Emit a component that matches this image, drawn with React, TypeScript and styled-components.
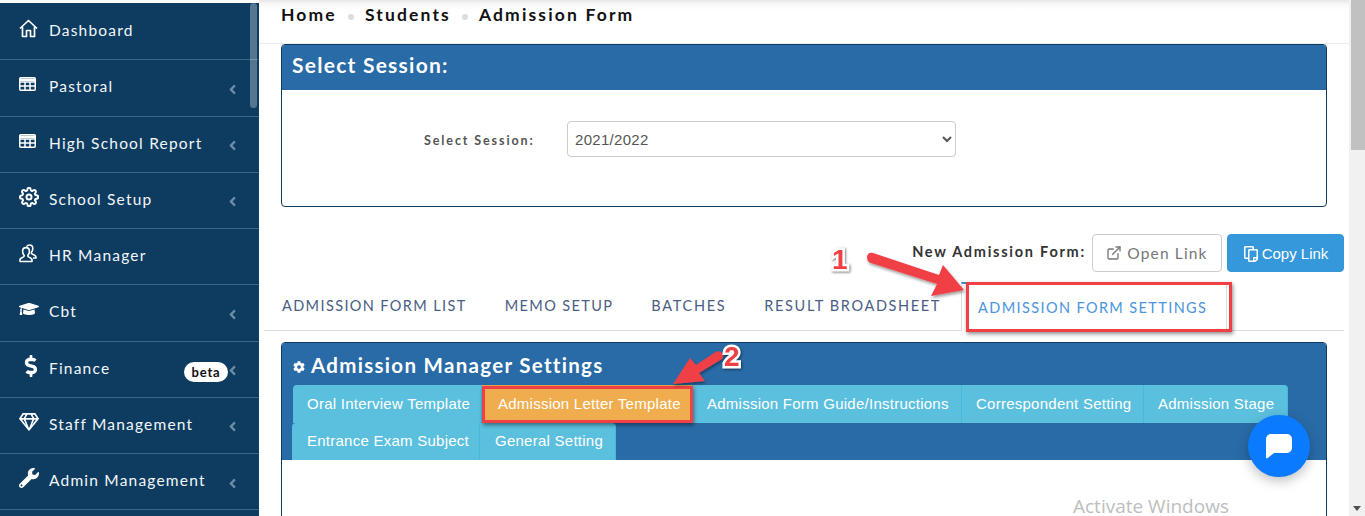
import React from "react";
import styled, { createGlobalStyle } from "styled-components";
import {
  FaGraduationCap,
  FaDollarSign,
  FaRegGem,
  FaWrench,
  FaAngleLeft,
  FaCog,
  FaRegCopy,
} from "react-icons/fa";
import { FiExternalLink, FiSettings } from "react-icons/fi";

const GlobalStyle = createGlobalStyle`
  html, body {
    margin: 0;
    padding: 0;
    height: 516px;
    overflow: hidden;
    background: #fff;
    font-family: "Lato", "Open Sans", sans-serif;
  }
  * { box-sizing: border-box; }
`;

const Page = styled.div`
  position: relative;
  width: 1365px;
  height: 516px;
  display: flex;
  overflow: hidden;
`;

const Sidebar = styled.nav`
  position: relative;
  width: 259px;
  height: 513px;
  margin-top: 3px;
  padding-top: 1px;
  background: #0d3c60;
  flex-shrink: 0;
  overflow: hidden;
`;

const SideThumb = styled.div`
  position: absolute;
  top: 0;
  right: 2px;
  width: 7px;
  height: 105px;
  border-radius: 4px;
  background: rgba(255, 255, 255, 0.3);
`;

const SideRow = styled.div`
  height: 56.25px;
  display: flex;
  align-items: center;
  padding: 0 26px 3px 19px;
  border-bottom: 1px solid #3f6785;
  color: #f2f6f9;
  font-size: 15.5px;
  letter-spacing: 1.2px;
`;

const SideIcon = styled.span`
  width: 30px;
  display: flex;
  align-items: center;
  font-size: 20px;
  margin-top: -4px;
  color: #fff;
`;

const DollarIcon = styled(FaDollarSign)`
  font-size: 22px;
  margin-left: 1px;
`;

const SideLabel = styled.span`
  flex: 1;
  white-space: nowrap;
`;

const Chevron = styled.span`
  display: flex;
  color: #6f8ca3;
  font-size: 15px;
  margin-top: 6px;
  margin-right: -7px;
`;

const Beta = styled.span`
  background: #fff;
  color: #111;
  border-radius: 10px;
  width: 44px;
  height: 20px;
  display: flex;
  align-items: center;
  justify-content: center;
  font-size: 13px;
  font-weight: 700;
  letter-spacing: 0.8px;
  margin-right: -3px;
  margin-top: 8px;
`;

const Main = styled.main`
  flex: 1;
  min-width: 0;
  height: 516px;
  overflow: hidden;
  display: flex;
  flex-direction: column;
  > * {
    flex-shrink: 0;
  }
`;

const Crumbs = styled.header`
  height: 44px;
  padding: 3px 0 0 22px;
  display: flex;
  align-items: flex-start;
  gap: 11px;
  border-bottom: 1px solid #ececec;
  background: linear-gradient(#e6e6e6 0, #f8f8f8 4px, #fff 10px);
  color: #111;
  font-size: 17.5px;
  font-weight: 700;
  letter-spacing: 2.15px;
  line-height: 24px;
`;

const CrumbDot = styled.span`
  width: 6px;
  height: 6px;
  margin-top: 11px;
  border-radius: 50%;
  background: #ddd;
`;

const Panel = styled.section<{ $gap?: number }>`
  margin: ${(p) => p.$gap ?? 0}px 22px 0;
  border: 1px solid #0d3c60;
  border-radius: 4px;
  overflow: hidden;
  background: #fff;
`;

const SessionHead = styled.h2`
  margin: 0;
  height: 45px;
  padding-left: 10px;
  background: #296ba7;
  color: #fff;
  font-size: 21px;
  font-weight: 700;
  letter-spacing: 1.25px;
  line-height: 40px;
`;

const SessionBody = styled.div`
  height: 116px;
  padding: 31px 0 0 142px;
  display: flex;
  align-items: flex-start;
`;

const SessionLabel = styled.label`
  width: 143px;
  margin-top: 12px;
  color: #555;
  font-size: 12.5px;
  font-weight: 700;
  letter-spacing: 1.9px;
`;

const SessionSelect = styled.select`
  width: 389px;
  height: 36px;
  padding: 0 3px;
  border: 1px solid #ccc;
  border-radius: 4px;
  background: #fff;
  color: #555;
  font-family: "Liberation Sans", sans-serif;
  font-size: 15px;
  letter-spacing: 0.3px;
`;

const LinkRow = styled.div`
  margin: 27px 5px 0 0;
  height: 38px;
  display: flex;
  justify-content: flex-end;
  align-items: center;
  gap: 5px;
`;

const LinkLabel = styled.span`
  color: #333;
  font-size: 14.5px;
  font-weight: 700;
  letter-spacing: 1.75px;
  margin: -3px 1px 0 0;
`;

const LinkButton = styled.button<{ $primary?: boolean }>`
  height: 38px;
  padding-bottom: ${(p) => (p.$primary ? "0" : "2px")};
  display: flex;
  align-items: center;
  justify-content: center;
  gap: ${(p) => (p.$primary ? "3px" : "5px")};
  width: ${(p) => (p.$primary ? "117px" : "130px")};
  border-radius: 4px;
  border: 1px solid ${(p) => (p.$primary ? "#3498db" : "#ccc")};
  background: ${(p) => (p.$primary ? "#3498db" : "#fff")};
  color: ${(p) => (p.$primary ? "#fff" : "#777")};
  font-family: ${(p) => (p.$primary ? '"Liberation Sans", sans-serif' : '"Lato", sans-serif')};
  font-size: ${(p) => (p.$primary ? "15px" : "15.5px")};
  letter-spacing: ${(p) => (p.$primary ? "0" : "1.15px")};
`;

const CopyIcon = styled(FaRegCopy)`
  transform: scaleY(-1);
`;

const TabBar = styled.div`
  margin: 10px 5px 0;
  height: 49px;
  display: flex;
  border-bottom: 1px solid #ddd;
`;

const Tab = styled.div<{ $active?: boolean; $spacing?: number }>`
  height: ${(p) => (p.$active ? "49px" : "48px")};
  margin-right: 2px;
  padding: ${(p) => (p.$active ? "15px 19px 0 16px" : "14px 17px 0")};
  background: #fff;
  border: 1px solid ${(p) => (p.$active ? "#ddd" : "transparent")};
  border-top: ${(p) => (p.$active ? "2px solid #3b8cd0" : "1px solid transparent")};
  border-bottom: none;
  color: ${(p) => (p.$active ? "#4a94dc" : "#4a5d85")};
  font-size: 14.5px;
  letter-spacing: ${(p) => p.$spacing ?? 1.38}px;
  text-transform: uppercase;
  white-space: nowrap;
`;

const ManagerHead = styled.div`
  background: #296ba7;
  padding: 2px 10px 0;
  height: 117px;
`;

const ManagerTitle = styled.h3`
  margin: 0;
  height: 40px;
  display: flex;
  align-items: center;
  gap: 6px;
  padding-left: 1px;
  color: #fff;
  font-size: 20.5px;
  font-weight: 700;
  letter-spacing: 1.3px;
  svg {
    font-size: 12px;
    margin-top: 4px;
  }
`;

const PillRow = styled.div<{ $shift?: number; $line: number }>`
  display: flex;
  height: 37.5px;
  margin-left: ${(p) => p.$shift ?? 0}px;
  line-height: ${(p) => p.$line}px;
`;

const Pill = styled.div<{
  $active?: boolean;
  $width: number;
  $first?: boolean;
  $last?: boolean;
  $inset?: number;
}>`
  width: ${(p) => p.$width}px;
  padding-left: ${(p) => p.$inset ?? 14}px;
  background: ${(p) => (p.$active ? "#f0ad4e" : "#5bc0de")};
  border-right: 1px solid ${(p) => (p.$active ? "#eea236" : "#46b8da")};
  border-radius: ${(p) => (p.$first ? "4px" : "0")} ${(p) => (p.$last ? "4px" : "0")} 0 0;
  color: #fff;
  font-family: "Liberation Sans", sans-serif;
  font-size: 15px;
  letter-spacing: 0.25px;
  white-space: nowrap;
`;

const ManagerBody = styled.div`
  height: 80px;
`;

const Scrollbar = styled.aside`
  width: 16px;
  flex-shrink: 0;
  background: #f1f1f1;
  display: flex;
  flex-direction: column;
  justify-content: space-between;
  align-items: center;
  padding-bottom: 5px;
`;

const ScrollThumb = styled.div`
  width: 14px;
  height: 150px;
  margin-left: 2px;
  background: #c1c1c1;
`;

const ScrollArrow = styled.div`
  width: 0;
  height: 0;
  border-left: 4px solid transparent;
  border-right: 4px solid transparent;
  border-top: 5px solid #505050;
`;

const Notes = styled.svg`
  position: absolute;
  inset: 0;
  width: 1365px;
  height: 516px;
  pointer-events: none;
`;

const NoteBox = styled.div<{ $x: number; $y: number; $w: number; $h: number }>`
  position: absolute;
  left: ${(p) => p.$x}px;
  top: ${(p) => p.$y}px;
  width: ${(p) => p.$w}px;
  height: ${(p) => p.$h}px;
  border: 3px solid #f04045;
  box-shadow: 1px 2px 4px rgba(0, 0, 0, 0.45);
  pointer-events: none;
`;

const NoteNumber = styled.span<{ $x: number; $y: number }>`
  position: absolute;
  left: ${(p) => p.$x}px;
  top: ${(p) => p.$y}px;
  color: #f04045;
  font-family: "Liberation Sans", sans-serif;
  font-size: 28px;
  font-weight: 700;
  line-height: 30px;
  -webkit-text-stroke: 5px #fff;
  paint-order: stroke fill;
  filter: drop-shadow(1px 1px 1px rgba(0, 0, 0, 0.5));
`;

const ChatBubble = styled.div`
  position: absolute;
  left: 1248px;
  top: 415px;
  width: 62px;
  height: 62px;
  border-radius: 50%;
  background: #0a7aff;
  box-shadow: 0 4px 12px rgba(0, 0, 0, 0.25);
  display: flex;
  align-items: center;
  justify-content: center;
`;

const Watermark = styled.div`
  position: absolute;
  left: 1073px;
  top: 496px;
  color: #bdbdbd;
  font-family: "Open Sans", sans-serif;
  font-size: 19px;
  line-height: 20px;
  white-space: nowrap;
`;

const HomeIcon = () => (
  <svg width="19" height="19" viewBox="0 0 19 19" fill="none" stroke="#fff" strokeWidth="1.7" strokeLinejoin="round">
    <path d="M1 9.5 9.5 1.5 18 9.5M3.5 8v9.5h4v-6h4v6h4V8" />
  </svg>
);

const GridIcon = () => (
  <svg width="17" height="14" viewBox="0 0 17 14" fill="none" stroke="#fff" strokeWidth="1.5">
    <rect x="0.75" y="0.75" width="15.5" height="12.5" rx="1" />
    <path d="M0.75 5H16.25M0.75 9H16.25M6 5V13M11 5V13" />
    <path d="M0.75 2.8H16.25" strokeWidth="2.5" />
  </svg>
);

const PeopleIcon = () => (
  <svg width="19" height="19" viewBox="0 0 19 19" fill="none" stroke="#fff" strokeWidth="1.6" strokeLinejoin="round">
    <path d="M1 17.5v-1.6c0-1.4 1.2-2 2.8-2.6 1.2-.5 1.6-1 1.4-1.8C4.2 10.400 3.600 9 3.600 7.200 3.600 5 5 3.600 7 3.600s3.400 1.400 3.400 3.600c0 1.800-.6 3.200-1.600 4.300-.2.800.2 1.300 1.400 1.800 1.600.6 2.800 1.200 2.800 2.600v1.600z" />
    <path d="M7.500 2.600C8.200 1.600 9.200 1 10.500 1c2 0 3.300 1.500 3.300 3.500 0 1.600-.5 2.900-1.500 4-.2.700.2 1.200 1.300 1.700 1.800.7 3.400 1.400 3.400 2.800v1h-3" />
  </svg>
);

const menu: { label: string; icon: React.ReactNode; arrow?: boolean; beta?: boolean }[] = [
  { label: "Dashboard", icon: <HomeIcon /> },
  { label: "Pastoral", icon: <GridIcon />, arrow: true },
  { label: "High School Report", icon: <GridIcon />, arrow: true },
  { label: "School Setup", icon: <FiSettings strokeWidth={2.4} />, arrow: true },
  { label: "HR Manager", icon: <PeopleIcon /> },
  { label: "Cbt", icon: <FaGraduationCap />, arrow: true },
  { label: "Finance", icon: <DollarIcon />, arrow: true, beta: true },
  { label: "Staff Management", icon: <FaRegGem />, arrow: true },
  { label: "Admin Management", icon: <FaWrench />, arrow: true },
];

const tabs: { label: string; spacing?: number }[] = [
  { label: "Admission Form List" },
  { label: "Memo Setup" },
  { label: "Batches", spacing: 1.7 },
  { label: "Result Broadsheet", spacing: 1.65 },
];

export default function App() {
  return (
    <Page>
      <GlobalStyle />
      <Sidebar>
        {menu.map((item) => (
          <SideRow key={item.label}>
            <SideIcon>{item.icon}</SideIcon>
            <SideLabel>{item.label}</SideLabel>
            {item.beta && <Beta>beta</Beta>}
            {item.arrow && (
              <Chevron>
                <FaAngleLeft />
              </Chevron>
            )}
          </SideRow>
        ))}
        <SideThumb />
      </Sidebar>

      <Main>
        <Crumbs>
          <span>Home</span>
          <CrumbDot />
          <span>Students</span>
          <CrumbDot />
          <span>Admission Form</span>
        </Crumbs>

        <Panel>
          <SessionHead>Select Session:</SessionHead>
          <SessionBody>
            <SessionLabel>Select Session:</SessionLabel>
            <SessionSelect defaultValue="2021/2022">
              <option>2021/2022</option>
            </SessionSelect>
          </SessionBody>
        </Panel>

        <LinkRow>
          <LinkLabel>New Admission Form:</LinkLabel>
          <LinkButton>
            <FiExternalLink size={16} />
            Open Link
          </LinkButton>
          <LinkButton $primary>
            <CopyIcon size={16} />
            Copy Link
          </LinkButton>
        </LinkRow>

        <TabBar>
          {tabs.map((t) => (
            <Tab key={t.label} $spacing={t.spacing}>
              {t.label}
            </Tab>
          ))}
          <Tab $active>Admission Form Settings</Tab>
        </TabBar>

        <Panel $gap={11}>
          <ManagerHead>
            <ManagerTitle>
              <FaCog />
              Admission Manager Settings
            </ManagerTitle>
            <PillRow $shift={1} $line={37.5}>
              <Pill $first $width={189}>Oral Interview Template</Pill>
              <Pill $active $width={211} $inset={16}>Admission Letter Template</Pill>
              <Pill $width={269}>Admission Form Guide/Instructions</Pill>
              <Pill $width={182}>Correspondent Setting</Pill>
              <Pill $last $width={144}>Admission Stage</Pill>
            </PillRow>
            <PillRow $line={36.5}>
              <Pill $first $width={188} $inset={15}>Entrance Exam Subject</Pill>
              <Pill $last $width={136} $inset={15}>General Setting</Pill>
            </PillRow>
          </ManagerHead>
          <ManagerBody />
        </Panel>
      </Main>

      <Scrollbar>
        <ScrollThumb />
        <ScrollArrow />
      </Scrollbar>

      <NoteBox $x={966} $y={282} $w={266} $h={50} />
      <NoteBox $x={482} $y={386} $w={211} $h={37} />
      <Notes viewBox="0 0 1365 516">
        <defs>
          <filter id="noteShadow" x="-20%" y="-20%" width="140%" height="140%">
            <feDropShadow dx="1" dy="2" stdDeviation="1.5" floodColor="#000" floodOpacity="0.4" />
          </filter>
        </defs>
        <path
          d="M867 257 Q867 262 871 263 L937 284 L931 296 L964 290 L943 265 L939 275 L873 253 Q868 252 867 257 Z"
          fill="#f04045"
          filter="url(#noteShadow)"
        />
        <path
          d="M722 359 Q725 355 721 352 Q718 350 714 353 L696 365 L690 358 L673 384 L705 381 L699 373 Z"
          fill="#f04045"
          filter="url(#noteShadow)"
        />
      </Notes>
      <NoteNumber $x={832} $y={245}>1</NoteNumber>
      <NoteNumber $x={724} $y={342}>2</NoteNumber>

      <ChatBubble>
        <svg width="28" height="26" viewBox="0 0 28 26">
          <path
            d="M6 1h16a5 5 0 0 1 5 5v9a5 5 0 0 1-5 5H9l-6.500 5.200c-.6.400-1.500 0-1.500-.8V6a5 5 0 0 1 5-5z"
            fill="#fff"
          />
        </svg>
      </ChatBubble>
      <Watermark>Activate Windows</Watermark>
    </Page>
  );
}
